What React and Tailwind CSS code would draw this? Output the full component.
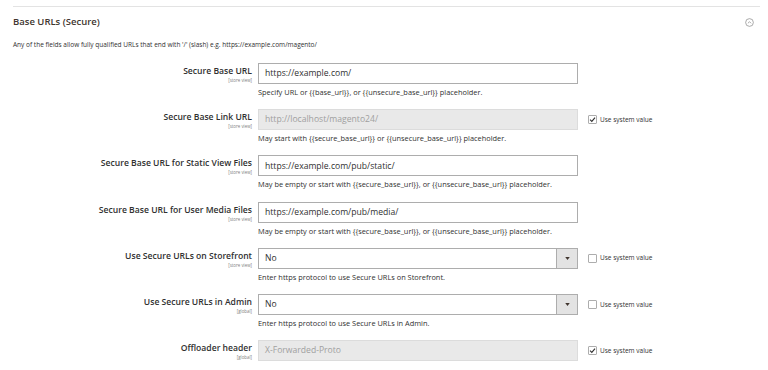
import React from 'react';

const FIELDS = [
    {
        label: 'Secure Base URL',
        scope: '[store view]',
        type: 'text',
        value: 'https://example.com/',
        note: 'Specify URL or {{base_url}}, or {{unsecure_base_url}} placeholder.',
    },
    {
        label: 'Secure Base Link URL',
        scope: '[store view]',
        type: 'text',
        value: 'http://localhost/magento24/',
        disabled: true,
        inherit: true,
        note: 'May start with {{secure_base_url}} or {{unsecure_base_url}} placeholder.',
    },
    {
        label: 'Secure Base URL for Static View Files',
        scope: '[store view]',
        type: 'text',
        value: 'https://example.com/pub/static/',
        note: 'May be empty or start with {{secure_base_url}}, or {{unsecure_base_url}} placeholder.',
    },
    {
        label: 'Secure Base URL for User Media Files',
        scope: '[store view]',
        type: 'text',
        value: 'https://example.com/pub/media/',
        note: 'May be empty or start with {{secure_base_url}}, or {{unsecure_base_url}} placeholder.',
    },
    {
        label: 'Use Secure URLs on Storefront',
        scope: '[store view]',
        type: 'select',
        value: 'No',
        inherit: false,
        note: 'Enter https protocol to use Secure URLs on Storefront.',
    },
    {
        label: 'Use Secure URLs in Admin',
        scope: '[global]',
        type: 'select',
        value: 'No',
        inherit: false,
        note: 'Enter https protocol to use Secure URLs in Admin.',
    },
    {
        label: 'Offloader header',
        scope: '[global]',
        type: 'text',
        value: 'X-Forwarded-Proto',
        disabled: true,
        inherit: true,
    },
];

const Checkbox = ({ checked }) => (
    <span className="flex h-[9px] w-[9px] items-center justify-center rounded-[1px] border border-[#adadad] bg-white">
        {checked && (
            <svg viewBox="0 0 10 10" className="h-[7px] w-[7px]">
                <path d="M1.5 5.2 L4 7.6 L8.6 2.2" fill="none" stroke="#303030" strokeWidth="1.6" />
            </svg>
        )}
    </span>
);

const Field = ({ field }) => {
    const base = 'flex h-[21px] w-full items-center border text-[8.6px] leading-none';
    return (
        <div className="flex items-start">
            <div className="w-[258px] shrink-0 pr-[6px] pt-[3px] text-right">
                <div className="text-[8.6px] font-semibold leading-[11px] text-[#303030]">{field.label}</div>
                <div className="text-[4.4px] leading-[6px] text-[#808080]">{field.scope}</div>
            </div>
            <div className="w-[320px] shrink-0">
                {field.type === 'select' ? (
                    <div className={`${base} border-[#adadad] bg-white`}>
                        <span className="flex-1 pl-[6px] text-[#303030]">{field.value}</span>
                        <span className="flex h-full w-[21px] items-center justify-center border-l border-[#adadad] bg-[#e3e3e3]">
                            <svg viewBox="0 0 6 4" className="h-[3px] w-[5px]">
                                <path d="M0 0 H6 L3 4 Z" fill="#41362f" />
                            </svg>
                        </span>
                    </div>
                ) : (
                    <div
                        className={`${base} pl-[6px] ${
                            field.disabled
                                ? 'border-[#dcdcdc] bg-[#e9e9e9] text-[#a0a0a0]'
                                : 'border-[#adadad] bg-white text-[#303030]'
                        }`}
                    >
                        {field.value}
                    </div>
                )}
                {field.note && (
                    <div className="mt-[3px] text-[7.4px] leading-[10px] text-[#303030]">{field.note}</div>
                )}
            </div>
            {field.inherit !== undefined && (
                <label className="ml-[10px] flex h-[21px] items-center gap-[3px] text-[6.5px] text-[#303030]">
                    <Checkbox checked={field.inherit} />
                    <span>Use system value</span>
                </label>
            )}
        </div>
    );
};

export default function App() {
    return (
        <div className="h-[370px] w-[768px] overflow-hidden bg-white font-['Open_Sans',sans-serif]">
            <div className="mx-[13px] mr-[8px] mt-[6px] border-t border-[#e3e3e3]">
                {/* Section title */}
                <div className="flex items-center justify-between pr-[6px] pt-[9px]">
                    <span className="text-[9.5px] font-semibold leading-[12px] text-[#41362f]">Base URLs (Secure)</span>
                    <svg viewBox="0 0 10 10" className="h-[9px] w-[9px]">
                        <circle cx="5" cy="5" r="4.3" fill="none" stroke="#8a8a8a" strokeWidth="0.8" />
                        <path d="M3.2 5.9 L5 4.1 L6.8 5.9" fill="none" stroke="#8a8a8a" strokeWidth="0.8" />
                    </svg>
                </div>
                <div className="mt-[12px] text-[6.5px] leading-[9px] text-[#303030]">
                    Any of the fields allow fully qualified URLs that end with '/' (slash) e.g. https://example.com/magento/
                </div>

                {/* Fields */}
                <div className="-ml-[13px] mt-[14px] flex flex-col gap-[12.2px]">
                    {FIELDS.map(f => (
                        <Field key={f.label} field={f} />
                    ))}
                </div>
            </div>
        </div>
    );
}
